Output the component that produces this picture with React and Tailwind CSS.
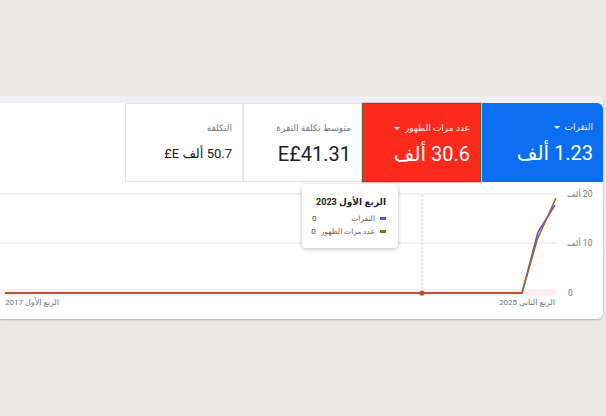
const FONT = { fontFamily: 'Roboto, "DejaVu Sans", "Noto Sans", sans-serif' };

function Caret({ className }) {
  return (
    <svg viewBox="0 0 10 6" className={className}>
      <path d="M1 1h8L5 5z" fill="currentColor" />
    </svg>
  );
}

function Tile({ label, value, caret, tone, width, valueSize = "text-[20px]" }) {
  const tones = {
    blue: "bg-[#0b6ef2] text-white rounded-tr-[6px]",
    red: "bg-[#fb2a1c] text-white border border-[#6e5a1c] outline outline-1 outline-[#f5b4dc]",
    plain: "bg-white text-[#202124] border border-[#e6e6e6]",
  };
  return (
    <div className={`${width} h-full shrink-0 flex flex-col pr-[10px] pt-[18px] ${tones[tone]}`}>
      <div
        className={`flex items-center gap-[4px] text-[9px] leading-[12px] whitespace-nowrap ${
          tone === "plain" ? "text-[#70757a]" : "text-white/90"
        }`}
      >
        <span>{label}</span>
        {caret && <Caret className="w-[8px] h-[5px]" />}
      </div>
      <div className={`mt-[8px] ${valueSize} leading-[24px] whitespace-nowrap`}>{value}</div>
    </div>
  );
}

function Chart() {
  // page coords -> svg coords (svg top = 182)
  const y = (v) => v - 182;
  return (
    <div className="relative h-[137px]">
      <svg width="603" height="137" className="absolute inset-0">
        <rect x="0" y={y(289)} width="556" height="7" fill="#fdeef3" />
        <line x1="0" x2="557" y1={y(194)} y2={y(194)} stroke="#e3e3e3" />
        <line x1="0" x2="557" y1={y(243)} y2={y(243)} stroke="#e3e3e3" />
        <line x1="422" x2="422" y1={y(195)} y2={y(293)} stroke="#c8c8c8" strokeDasharray="2 2" />
        <polyline
          points={`5,${y(293)} 522,${y(293)} 538,${y(232)} 555,${y(205)}`}
          fill="none"
          stroke="#4a5ae8"
          strokeWidth="1.6"
        />
        <polyline
          points={`5,${y(293)} 522,${y(293)} 537,${y(240)} 556,${y(198)}`}
          fill="none"
          stroke="#a4661f"
          strokeWidth="1.6"
        />
        <line x1="5" x2="522" y1={y(293)} y2={y(293)} stroke="#b9532b" strokeWidth="1.6" />
        <circle cx="422" cy={y(293)} r="2.6" fill="#b9532b" />
      </svg>

      {/* y axis labels */}
      <div dir="rtl" className="absolute left-[567px] top-[6px] text-[8.5px] leading-[12px] text-[#70757a] whitespace-nowrap">20 ألف</div>
      <div dir="rtl" className="absolute left-[567px] top-[55px] text-[8.5px] leading-[12px] text-[#70757a] whitespace-nowrap">10 ألف</div>
      <div className="absolute left-[568px] top-[105px] text-[8.5px] leading-[12px] text-[#70757a]">0</div>

      {/* x axis labels */}
      <div dir="rtl" className="absolute left-[5px] top-[115px] text-[8px] leading-[12px] text-[#70757a] whitespace-nowrap">الربع الأول 2017</div>
      <div dir="rtl" className="absolute right-[48px] top-[115px] text-[8px] leading-[12px] text-[#70757a] whitespace-nowrap">الربع الثاني 2025</div>

      {/* tooltip */}
      <div
        dir="rtl"
        className="absolute left-[302px] top-[2px] w-[96px] h-[64px] bg-white rounded-[3px] shadow-[0_1px_4px_rgba(0,0,0,0.25)] pr-[12px] pl-[10px] pt-[12px]"
      >
        <div className="text-[9px] leading-[12px] font-bold text-[#202124] whitespace-nowrap">الربع الأول 2023</div>
        <div className="mt-[4px] flex items-center gap-[5px] text-[7.5px] leading-[13px] text-[#5f6368] whitespace-nowrap">
          <span className="w-[6px] h-[3px] bg-[#4a5ae8] shrink-0" />
          <span className="flex-1">النقرات</span>
          <span className="text-[#3c4043] text-[8px]">0</span>
        </div>
        <div className="flex items-center gap-[5px] text-[7.5px] leading-[13px] text-[#5f6368] whitespace-nowrap">
          <span className="w-[6px] h-[3px] bg-[#8a6a1e] shrink-0" />
          <span className="flex-1">عدد مرات الظهور</span>
          <span className="text-[#3c4043] text-[8px]">0</span>
        </div>
      </div>
    </div>
  );
}

export default function App() {
  return (
    <div style={FONT} className="w-[606px] h-[416px] bg-[#ebe7e7] overflow-hidden">
      <div className="h-[96px]" />
      <div className="mr-[3px] h-[223px] bg-white rounded-r-[6px] shadow-[0_1px_2px_rgba(0,0,0,0.25)] flex flex-col overflow-hidden">
        <div className="h-[7px] bg-[#f0f0f2] shrink-0" />
        <div dir="rtl" className="h-[79px] shrink-0 flex">
          <Tile width="w-[122px]" tone="blue" label="النقرات" caret value="1.23 ألف" />
          <Tile width="w-[119px]" tone="red" label="عدد مرات الظهور" caret value="30.6 ألف" />
          <Tile width="w-[119px]" tone="plain" label="متوسط تكلفة النقرة" value="E£41.31" />
          <Tile width="w-[118px]" tone="plain" label="التكلفة" value="50.7 ألف E£" valueSize="text-[13px]" />
        </div>
        <Chart />
      </div>
    </div>
  );
}
